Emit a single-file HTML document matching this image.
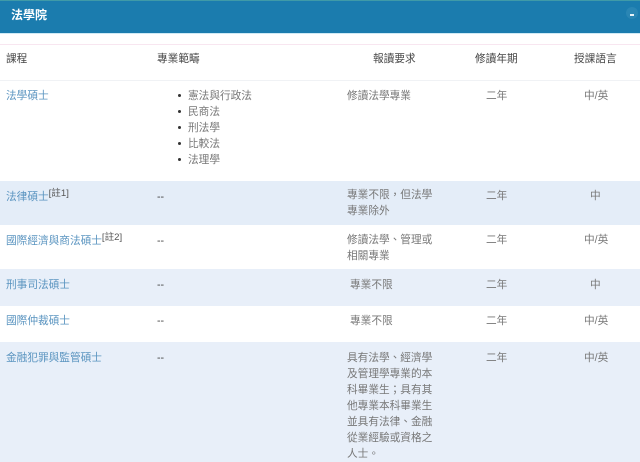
<!DOCTYPE html>
<html lang="zh-Hant"><head><meta charset="utf-8"><style>
html,body{margin:0;padding:0;width:640px;height:462px;overflow:hidden;background:#fff}
body{position:relative;font-family:"Liberation Sans","Noto Sans CJK TC",sans-serif;font-size:10.67px;color:#777}
div{position:absolute}
.t{white-space:nowrap;line-height:16px;filter:blur(.35px)}
.a{color:#5a94c0;left:6px}
.h{color:#444;top:51px}
.c{color:#777}
.d{left:157px;color:#444}
sup{font-size:9.6px;line-height:0;color:#555;vertical-align:baseline;position:relative;top:-4px}
</style></head><body>
<div style="left:0;top:0;width:640px;height:33px;background:#1b7cae"></div>
<div style="left:0;top:0;width:640px;height:1px;background:#3f9aa8"></div>
<div style="left:0;top:33px;width:640px;height:1px;background:#cfeaf5"></div>
<div class="t" style="left:11px;top:7px;color:#fff;font-weight:bold;font-size:12px">法學院</div>
<div style="left:626px;top:7px;width:12px;height:12px;border-radius:50%;background:#2a86b4"></div>
<div style="left:630px;top:14px;width:4px;height:2px;background:#e6f2f8"></div>
<div style="left:0;top:44px;width:640px;height:1px;background:#f8e6f0"></div>
<div style="left:0;top:80px;width:640px;height:1px;background:#f0f2f5"></div>
<div style="left:0;top:181px;width:640px;height:44px;background:#e4edf8"></div>
<div style="left:0;top:269px;width:640px;height:37px;background:#e8eff9"></div>
<div style="left:0;top:342px;width:640px;height:120px;background:#e8eff9"></div>

<div class="t h" style="left:6px">課程</div>
<div class="t h" style="left:157px">專業範疇</div>
<div class="t h" style="left:373px">報讀要求</div>
<div class="t h" style="left:475px">修讀年期</div>
<div class="t h" style="left:574px">授課語言</div>

<div class="t a" style="top:88px">法學碩士</div>
<div class="t c" style="left:188px;top:88px">憲法與行政法<br>民商法<br>刑法學<br>比較法<br>法理學</div>
<div style="left:178px;top:94px;width:3px;height:3px;border-radius:50%;background:#333"></div>
<div style="left:178px;top:110px;width:3px;height:3px;border-radius:50%;background:#333"></div>
<div style="left:178px;top:126px;width:3px;height:3px;border-radius:50%;background:#333"></div>
<div style="left:178px;top:142px;width:3px;height:3px;border-radius:50%;background:#333"></div>
<div style="left:178px;top:158px;width:3px;height:3px;border-radius:50%;background:#333"></div>
<div class="t c" style="left:347px;top:88px">修讀法學專業</div>
<div class="t c" style="left:486px;top:88px">二年</div>
<div class="t c" style="left:584px;top:88px">中/英</div>

<div class="t a" style="top:189px">法律碩士<sup>[註1]</sup></div>
<div class="t d" style="top:189px">--</div>
<div class="t c" style="left:347px;top:187px">專業不限，但法學<br>專業除外</div>
<div class="t c" style="left:486px;top:188px">二年</div>
<div class="t c" style="left:590px;top:188px">中</div>

<div class="t a" style="top:233px">國際經濟與商法碩士<sup>[註2]</sup></div>
<div class="t d" style="top:233px">--</div>
<div class="t c" style="left:347px;top:232px">修讀法學、管理或<br>相關專業</div>
<div class="t c" style="left:486px;top:232px">二年</div>
<div class="t c" style="left:584px;top:232px">中/英</div>

<div class="t a" style="top:277px">刑事司法碩士</div>
<div class="t d" style="top:277px">--</div>
<div class="t c" style="left:350px;top:277px">專業不限</div>
<div class="t c" style="left:486px;top:277px">二年</div>
<div class="t c" style="left:590px;top:277px">中</div>

<div class="t a" style="top:313px">國際仲裁碩士</div>
<div class="t d" style="top:313px">--</div>
<div class="t c" style="left:350px;top:313px">專業不限</div>
<div class="t c" style="left:486px;top:313px">二年</div>
<div class="t c" style="left:584px;top:313px">中/英</div>

<div class="t a" style="top:350px">金融犯罪與監管碩士</div>
<div class="t d" style="top:350px">--</div>
<div class="t c" style="left:347px;top:350px">具有法學、經濟學<br>及管理學專業的本<br>科畢業生；具有其<br>他專業本科畢業生<br>並具有法律、金融<br>從業經驗或資格之<br>人士。</div>
<div class="t c" style="left:486px;top:350px">二年</div>
<div class="t c" style="left:584px;top:350px">中/英</div>
</body></html>
